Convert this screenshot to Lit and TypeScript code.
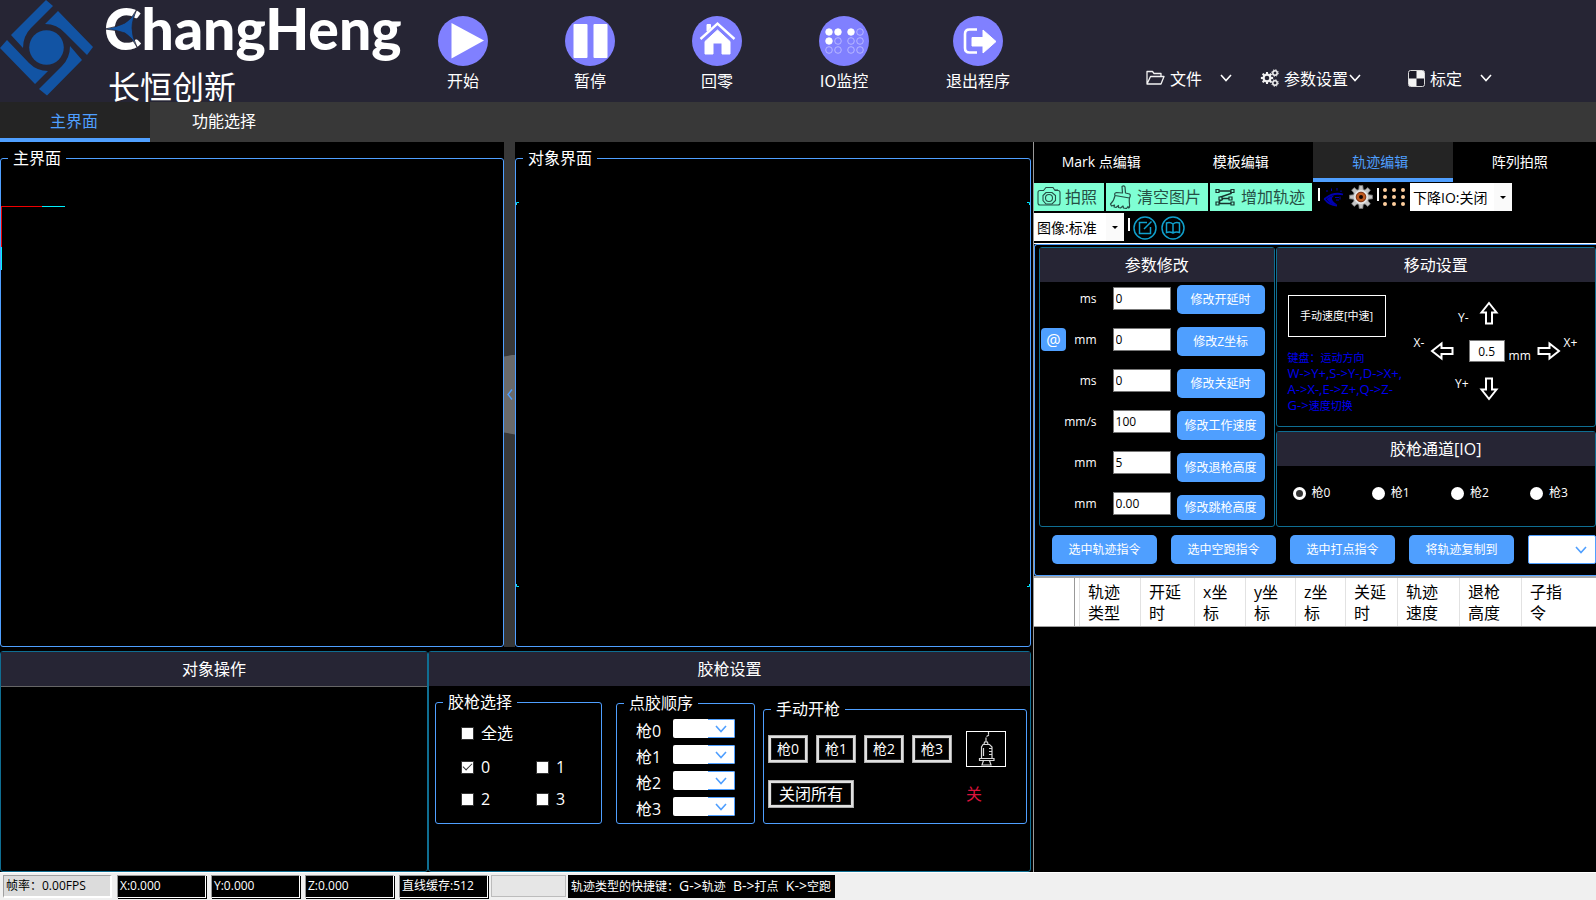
import { LitElement, html, svg, css, nothing } from "lit";
import { customElement, state } from "lit/decorators.js";

const chevron = html`<svg class="chev" viewBox="0 0 12 8" width="12" height="8" aria-hidden="true">
  <path d="M1 1l5 5.5L11 1" fill="none" stroke="currentColor" stroke-width="1.6" />
</svg>`;

const disc = (inner: unknown) => html`<svg viewBox="0 0 50 50" width="50" height="50" aria-hidden="true">
  <circle cx="25" cy="25" r="25" fill="#8080ff" />${inner}
</svg>`;

const ioDots = [0, 1, 2].flatMap((r) =>
  [11, 20, 33, 42].map((x, c) => {
    const filled = (r === 0 && c < 3) || (r === 1 && c === 0);
    return svg`<circle cx=${x - 1} cy=${16 + r * 9} r="3.3" fill=${filled ? "#fff" : "none"} stroke=${filled ? "#fff" : "#c4c4ff"} stroke-width="0.8" />`;
  })
);

const mainActions = [
  { label: "开始", icon: disc(svg`<path d="M13.5 7L46 24.5 13.5 42.500z" fill="#fff" />`) },
  { label: "暂停", icon: disc(svg`<rect x="8.500" y="8" width="14" height="34" rx="1" fill="#fff" /><rect x="28.500" y="8" width="14" height="34" rx="1" fill="#fff" />`) },
  {
    label: "回零",
    icon: disc(svg`<path d="M8.500 23L25.500 7.500 42.500 23" fill="none" stroke="#fff" stroke-width="2.400" />
      <path d="M15 15V8.500h3.500V12z" fill="#fff" stroke="#fff" />
      <path d="M25.500 14L38 25.500V38H30V27h-9v11h-8V25.500z" fill="#fff" stroke="#fff" stroke-linejoin="round" />`),
  },
  { label: "IO监控", icon: disc(ioDots) },
  {
    label: "退出程序",
    icon: disc(svg`<path d="M24 13.500h-7.500q-4.500 0-4.500 4.500v14q0 4.500 4.500 4.500H24" fill="none" stroke="#fff" stroke-width="2.600" />
      <path d="M19 21.500h11V14l13 11.500L30 37v-7H19z" fill="#fff" stroke="#fff" stroke-linejoin="round" />`),
  },
];

const gearPath = (cx: number, cy: number, r: number, teeth: number, depth: number) => {
  const pts: string[] = [];
  for (let i = 0; i < teeth; i++) {
    const a = (i / teeth) * Math.PI * 2 - Math.PI / 2;
    const s = Math.PI / teeth;
    for (const [off, rad] of [[-0.9, r], [-0.5, r + depth], [0.5, r + depth], [0.9, r]]) {
      const t = a + off * s * 0.8;
      pts.push(`${(cx + Math.cos(t) * rad).toFixed(2)} ${(cy + Math.sin(t) * rad).toFixed(2)}`);
    }
  }
  return "M" + pts.join("L") + "z";
};

const menus = [
  {
    label: "文件",
    wide: true,
    icon: html`<svg viewBox="0 0 19 16" width="19" height="16" fill="none" stroke="#f2f2f2" stroke-width="1.300" stroke-linejoin="round">
      <path d="M1 14V1.500h5.500l1.500 2h7V6.500M1 14L4.500 6.500H18L15 14z" /></svg>`,
  },
  {
    label: "参数设置",
    wide: false,
    icon: html`<svg viewBox="0 0 19 18" width="19" height="18" fill="none" stroke="#f2f2f2">
      <path d=${gearPath(7, 9, 4.4, 8, 1.8)} fill="#f2f2f2" stroke="none" /><circle cx="7" cy="9" r="2.300" fill="#262534" stroke="none" />
      <circle cx="15" cy="4" r="2.200" stroke-width="1.500" /><circle cx="15" cy="4" r="3.300" stroke-dasharray="1.300 1.300" />
      <circle cx="15" cy="14" r="2.200" stroke-width="1.500" /><circle cx="15" cy="14" r="3.300" stroke-dasharray="1.300 1.300" /></svg>`,
  },
  {
    label: "标定",
    wide: true,
    icon: html`<svg viewBox="0 0 17 17" width="17" height="17">
      <rect x="0.500" y="0.500" width="16" height="16" rx="2" fill="#1c1b28" stroke="#d8d8d8" />
      <path d="M8.500 1H15q1 0 1 1v6.500H8.500zM1 8.500h7.500V16H2q-1 0-1-1z" fill="#f4f4f4" /></svg>`,
  },
];

const cameraIcon = html`<svg viewBox="0 0 24 22" width="24" height="22" fill="none" stroke="#264f45" stroke-width="1.100">
  <path d="M3 4.500h3.500L9 1.500h7l2 3h3q2 0 2 2V17q0 2-2 2H3q-2 0-2-2V6.500q0-2 2-2z" />
  <path d="M9 6.500h6l3.500 3v5L15 18H9l-3-3.500v-5z" /><circle cx="12" cy="12" r="3.500" /><path d="M18 4h3" /></svg>`;
const broomIcon = html`<svg viewBox="0 0 24 24" width="24" height="24" fill="none" stroke="#264f45" stroke-width="1.200" stroke-linejoin="round">
  <path d="M13 1.500q2-1.500 3 .5l.500 6 4 1q1.500 1 0 4L6 10.500Q5 8 7.500 7.500l6 .5zM6 10.500Q5 16 1.500 19l1 2 3-1-.500 2 2 .5 2.500-2v2l2 .5 2.500-2 .500 2 3 .5 1.500-2 .500 1.500q1.500 0 1-4-.500-3.500 0-6" /></svg>`;
const trackIcon = html`<svg viewBox="0 0 20 18" width="20" height="18" fill="none" stroke="#16332c" stroke-width="1.600">
  <path d="M2.500 3H16v2.500L5.500 9v1.500h10M8 10.500L4.500 13v2.500h13" />
  <path d="M1 1.500h3v3H1zM16 1.500h3v3h-3zM4 9h3v3H4zM14 9h3v3h-3zM1 14h3v3H1zM16 14h3v3h-3z" fill="#7fffd4" stroke-width="1.200" /></svg>`;
const eyeIcon = html`<svg viewBox="0 0 22 20" width="22" height="20" fill="none" stroke="#0000b0">
  <path d="M20 7.500Q11 5 3 11q-2 1-1 1.500Q6 18 14 18.500" stroke-width="1.800" />
  <path d="M11 8.500Q6 12.500 14 17.500 7 18 3.500 12q3-3 7.500-3.500z" fill="#0000b0" stroke="none" />
  <path d="M4 3v2M8.500 1.500v2.500M14 1v2.500M18 3.500v1.500M12 10.500h4M13 13h3M17 9.500v3" /></svg>`;
const gearIcon = html`<svg viewBox="0 0 24 24" width="24" height="24">
  <path d=${gearPath(12, 12, 8, 8, 3.6)} fill="#c4c4c4" stroke="#777" stroke-width="0.800" />
  <circle cx="12" cy="12" r="7" fill="#e6e6e6" /><circle cx="12" cy="12" r="4.800" fill="#c05a20" stroke="#7a2c0c" /><circle cx="12" cy="12" r="2" fill="#120400" /></svg>`;
const dotsIcon = html`<svg viewBox="0 0 24 20" width="24" height="20" fill="#ffcf9e">
  ${[3, 12, 21].flatMap((x) => [3, 10, 17].map((y) => svg`<circle cx=${x} cy=${y} r="2" />`))}</svg>`;
const editIcon = html`<svg viewBox="0 0 24 24" width="24" height="24" fill="none" stroke="#10a0cc" stroke-width="1.500">
  <circle cx="12" cy="12" r="11" /><path d="M14 6.500H6.500v11h11V11M11 13l7.500-7.500" /></svg>`;
const bookIcon = html`<svg viewBox="0 0 24 24" width="24" height="24" fill="none" stroke="#10a0cc" stroke-width="1.500">
  <circle cx="12" cy="12" r="11" /><path d="M12 8q-3-2.500-6.500-1v9.500q3.500-1 6.500.500 3-1.500 6.500-.5V7Q15 5.500 12 8zv9" /></svg>`;
const syringeIcon = html`<svg viewBox="0 0 38 34" width="38" height="34" fill="none" stroke="#d8d8d8" stroke-width="1.200">
  <path d="M21.500 0v2.500M19.500 4.500L22 3M19 5.500v4M17.500 10h3l.500 2.500h-4zM16 12.500h6.500L25 15v11.500H14.500V15zM12.500 26.500H27v2H12.500zM16.500 28.500l-1.500 4.500h9l-1.500-4.500M15 33h9M22 16.500h3M22 19.500h3M22 22.500h3M16.500 16v8" /></svg>`;

const arrow = (deg: number) => html`<svg viewBox="0 0 24 24" width="24" height="24" fill="none" stroke="#fff" stroke-width="2">
  <path transform="rotate(${deg} 12 12)" d="M12 2l7.500 9.500H15v11H9v-11H4.500z" /></svg>`;

const params = [
  { id: "p-open", unit: "ms", value: "0", action: "修改开延时" },
  { id: "p-z", unit: "mm", value: "0", action: "修改Z坐标", at: true },
  { id: "p-close", unit: "ms", value: "0", action: "修改关延时" },
  { id: "p-speed", unit: "mm/s", value: "100", action: "修改工作速度" },
  { id: "p-back", unit: "mm", value: "5", action: "修改退枪高度" },
  { id: "p-jump", unit: "mm", value: "0.00", action: "修改跳枪高度" },
];

const columns = [["轨迹", "类型"], ["开延", "时"], ["x坐", "标"], ["y坐", "标"], ["z坐", "标"], ["关延", "时"], ["轨迹", "速度"], ["退枪", "高度"], ["子指", "令"]];
const guns = ["0", "1", "2", "3"];

@customElement("app-root")
export class AppRoot extends LitElement {
  @state() private tab = 0;
  @state() private editTab = 2;

  static styles = css`
    :host {
      --blue: #4f9fff;
      --teal: #0f6e92;
      --bar: #262534;
      display: block;
      background: #000;
      color: #fff;
      font: 16px/20px "Open Sans", "Noto Sans CJK SC", sans-serif;
    }
    * { box-sizing: border-box; }
    button, input, select { font: inherit; color: inherit; margin: 0; }
    button { padding: 0; border: 0; background: none; white-space: nowrap; cursor: pointer; }
    svg { display: block; flex: none; }
    .app { min-height: 100vh; display: grid; grid-template-rows: 102px 40px 1fr 28px; }

    header { background: var(--bar); display: flex; font-family: "Noto Sans CJK SC", sans-serif; }
    .brand { display: flex; width: 438px; gap: 11px; }
    .words { position: relative; }
    .name { font: 900 57px/56px Lato, sans-serif; height: 68px; }
    .spark { position: absolute; left: 0; top: 8px; }
    .cn { font-size: 32px; line-height: 34px; padding-left: 4px; }
    .actions { display: flex; gap: 77px; align-items: flex-start; padding-top: 16px; }
    .action { display: grid; justify-items: center; gap: 4px; line-height: 20px; }
    .menus { margin-left: auto; padding: 56px 104px 0 0; display: grid; grid-template-columns: 114px 148px 84px; align-items: start; }
    .menu { display: flex; align-items: center; gap: 5px; line-height: 44px; text-align: left; }
    .menu .chev { margin-left: -4px; }
    .menu.wide .chev { margin-left: 13px; }

    .tabs { display: flex; background: #383838; }
    .tab { width: 150px; padding: 2px 2px 0 0; border-bottom: 4px solid transparent; }
    .tab.on { background: #242424; color: var(--blue); border-color: var(--blue); }

    main { display: grid; grid-template-columns: 1033fr 563fr; }
    .left { display: grid; grid-template-rows: 1fr 221px; gap: 4px; padding-right: 2px; min-width: 0; }
    .views { display: grid; grid-template-columns: 504fr 11px 516fr; }
    fieldset { border: 1px solid var(--blue); border-radius: 3px; margin: 0; padding: 0; min-width: 0; position: relative; }
    legend { margin-left: 7px; padding: 0 5px; line-height: 32px; }
    .axes { position: absolute; left: 0; top: 32px; shape-rendering: crispEdges; }
    .corner { position: absolute; }
    .tl { left: 0; top: 28px; } .tr { right: 0; top: 28px; }
    .bl { left: 0; bottom: 59px; } .br { right: 0; bottom: 59px; }
    .split { background: #383838; display: grid; align-items: center; }
    .grip { height: 80px; width: 100%; background: #6a6a6a; color: var(--blue); display: grid; place-items: center; clip-path: polygon(0 2px, 100% 0, 100% 100%, 0 78px); }

    .lower { display: grid; grid-template-columns: 428fr 603fr; }
    .panel { border: 1px solid var(--teal); border-radius: 3px; min-width: 0; }
    h2 { margin: 0; font-size: 16px; font-weight: 400; line-height: 34px; text-align: center; background: var(--bar); }
    .objects { display: grid; grid-template-rows: 34px 1fr; }
    .list { border-top: 1px solid #666; }
    .groups { display: grid; grid-template-columns: 173fr 139fr 264fr; column-gap: 8px; align-items: end; padding: 0 3px 0 6px; height: 137px; }
    .pick { margin-right: 6px; }
    .checks { display: grid; grid-template-columns: 75px 1fr; padding: 0 0 9px 25px; row-gap: 2px; }
    .checks label { display: flex; align-items: center; gap: 7px; line-height: 30px; }
    .checks label:first-child { grid-column: 1 / 3; padding-bottom: 2px; }
    .box { appearance: none; width: 13px; height: 13px; background: #fff; border: 1px solid #333; display: grid; place-items: center; }
    .box:checked::after { content: ""; width: 8px; height: 4px; border: solid #333; border-width: 0 0 1px 1px; transform: rotate(-45deg); margin-top: -3px; }
    .order { padding: 0 19px; height: 104px; }
    .order div { display: flex; justify-content: space-between; height: 26px; line-height: 25px; }
    .combo { display: grid; grid-template: 100% / 1fr 27px; height: 19px; line-height: 17px; }
    .combo.s { width: 62px; }
    .combo select { appearance: none; grid-area: 1 / 1 / 2 / 3; width: 100%; height: 100%; background: #fff; border: 0; border-radius: 2px; outline-offset: 1px; color: #000; }
    .combo .drop { grid-area: 1 / 2; display: grid; place-items: center; color: var(--blue); border: solid var(--blue); border-width: 1px 1px 1px 0; pointer-events: none; border-radius: 0 2px 2px 0; }
    .manual { display: grid; grid-template-columns: 1fr 40px; padding: 6px 20px 15px 4px; row-gap: 13px; align-items: center; }
    .btns { display: flex; gap: 8px; }
    .hard { width: 40px; height: 28px; font-size: 14px; border: 3px solid #e1e1e1; box-shadow: inset 0 0 0 1px #222; outline: 1px solid #adadad; outline-offset: -1px; line-height: 20px; }
    .hard.all { width: 86px; font-size: 16px; }
    .syr { border: 1px solid #fff; width: 40px; height: 36px; }
    .off { color: #dc143c; }

    .right { display: flex; flex-direction: column; min-width: 0; border-left: 1px solid #9a9a9a; }
    .subtabs { display: flex; height: 40px; padding-right: 4px; font-size: 14px; }
    .subtabs .tab { flex: 1; width: auto; padding: 3px 5px 0 0; }
    .tools { display: flex; height: 30px; padding-top: 1px; align-items: flex-start; }
    .tools.second { height: 31px; }
    .mint { height: 28px; background: #7fffd4; color: #264f45; display: flex; align-items: center; gap: 4px; padding: 0 7px 0 3px; margin-right: 2px; }
    .mint.roomy { gap: 6px; padding-left: 5px; }
    .sep { width: 2px; height: 13px; background: #fff; margin: 5px 3px 0 4px; }
    .tool { display: grid; place-items: center; height: 28px; }
    .second .tool { height: 30px; }
    .tool + .tool { margin-left: 4px; }
    .combo.t { height: 28px; grid-template-columns: 1fr 18px; font-size: 14px; width: 102px; margin-left: 4px; }
    .combo.t select { border-radius: 0; padding: 0 3px; }
    .combo.t .drop { border: 0; color: #000; background: #fafafa; }
    .combo.m { width: 90px; margin-left: 0; }
    .edit { border-top: 1px solid #fff; }
    .inner { border: 1px solid var(--blue); border-right: 0; border-radius: 3px 0 0 3px; padding: 2px 0 11px 4px; }
    .cols { display: grid; grid-template-columns: 236fr 321fr; column-gap: 1px; }
    .stack { display: grid; grid-template-rows: 180px 96px; row-gap: 4px; padding: 0; }
    .params { display: grid; grid-template-columns: 1fr 58px 94px; padding: 3px 9px 6px 1px; font-size: 12px; }
    .units, .vals { display: grid; gap: 18px; grid-auto-rows: 23px; padding-top: 2px; align-content: start; }
    .units { padding-right: 16px; }
    .units div { display: flex; align-items: center; justify-content: flex-end; line-height: 23px; }
    .at { background: var(--blue); border-radius: 4px; width: 25px; height: 23px; font-size: 16px; line-height: 20px; margin-right: auto; }
    .num { width: 100%; height: 23px; background: #fff; color: #000; border: 1px solid #777; padding: 0 2px; font-size: 12px; border-radius: 0; }
    .mods { display: grid; gap: 13px; grid-template-rows: repeat(5, 29px) 25px; padding-left: 6px; }
    .pill { background: var(--blue); border-radius: 5px; font-size: 12px; line-height: 20px; }
    .move { display: flex; padding: 13px 0 0 11px; gap: 10px; font-size: 12px; }
    .help { width: 116px; white-space: nowrap; }
    .speed { width: 98px; height: 42px; border: 1px solid #fff; font-size: 11px; }
    .keys { margin: 12px 0 0; color: #0000f0; font-size: 13px; line-height: 16px; }
    .keys div { height: 16px; }
    .han { font-size: 11px; }
    .jog { display: grid; grid-template-columns: 16px 24px 15px 40px 28px 24px 1fr; grid-template-rows: 24px 24px 24px; row-gap: 14px; padding-top: 6px; line-height: 14px; white-space: nowrap; align-items: center; justify-items: start; }
    .jog .num { width: 36px; height: 22px; text-align: center; }
    .jog .y { grid-column: 3; align-self: end; justify-self: end; }
    .jog .y.down { align-self: start; }
    .jog .c { grid-column: 4; justify-self: center; }
    .jog .x { align-self: start; line-height: 8px; }
    .jog .u { align-self: end; }
    .jog .xr { padding-left: 3px; }
    .radios { display: flex; justify-content: space-between; padding: 0 27px 0 16px; font-size: 12px; line-height: 54px; }
    .radios label { display: flex; align-items: center; gap: 6px; }
    .radios input { appearance: none; width: 13px; height: 13px; border-radius: 50%; background: #fff; }
    .radios input:checked { background: #333; border: 3px solid #fff; }
    .sel { display: flex; gap: 14px; padding: 8px 0 0 13px; }
    .sel .pill { flex: 1; height: 29px; }
    .combo.c { width: 68px; height: 29px; grid-template-columns: 1fr 30px; }
    .combo.c select { border: 1px solid var(--blue); }
    .combo.c .drop { border: 0; }

    table { width: 100%; table-layout: fixed; border-collapse: separate; border-spacing: 0; background: #fff; color: #000; border-top: 2px solid #a8a8a8; border-bottom: 1px solid #a0a0a0; }
    th { font-weight: 400; text-align: left; line-height: 21px; padding: 4px 0 2px 8px; border-right: 1px solid #e2e2e2; white-space: nowrap; }
    th:last-child { border-right: 0; }
    th.head { border-right-color: #999; }
    .c0 { width: 41px; } .c1 { width: 5px; } .k0 { width: 61px; } .k1 { width: 54px; } .k2 { width: 51px; } .k3, .k4 { width: 50px; }
    .k5 { width: 52px; } .k6, .k7 { width: 62px; }
    th.c1 { padding: 0; }

    footer { background: #f0f0f0; display: flex; gap: 5px; padding: 2px 3px; font-size: 12px; line-height: 20px; border-top: 1px solid #fff; white-space: nowrap; }
    .cell { width: 89px; height: 23px; background: #000; border: 1px solid; border-color: #999 #fff #fff #999; padding: 0 2px; box-shadow: 1px 1px #000; }
    .cell.fps { width: 109px; background: #dcdcdc; color: #000; box-shadow: none; border-color: #a0a0a0 #fff #fff #a0a0a0; border-width: 1px 2px 2px 1px; }
    .prog { width: 75px; height: 22px; background: #e6e6e6; border: 1px solid #bcbcbc; margin-left: -2px; }
    .hint { background: #000; height: 23px; padding: 1px 4px 0 3px; margin-left: -3px; white-space: pre; }
    .lat { font-size: 14px; }
  `;

  private combo(kind: string, label: string, text = "", id = "") {
    return html`<span class="combo ${kind}">
      <select aria-label=${label} id=${id || nothing}><option>${text}</option></select>
      <span class="drop">${kind.startsWith("t")
        ? html`<svg viewBox="0 0 6 3" width="6" height="3"><path d="M0 0h6L3 3z" /></svg>`
        : chevron}</span>
    </span>`;
  }

  private corner(cls: string, d: string) {
    return html`<svg class="corner ${cls}" viewBox="0 0 4 4" width="4" height="4" fill="none" stroke="#00e5ff"><path d=${d} /></svg>`;
  }

  render() {
    return html`<div class="app">
      <header>
        <div class="brand">
          <svg viewBox="0 0 93 96" width="93" height="96" fill="#1254a4" aria-hidden="true">
            <circle cx="46.500" cy="47.500" r="17.300" />
            <path d="M46 0l7 6-22 22q-8 8-8 20L11 35z" />
            <path d="M58 11l35 36-6 8-22-22q-8-9-20-9z" />
            <path d="M47 95.500L82 60 70 46q0 12-8 20L39 89z" />
            <path d="M0 48l7-8 22 23q8 8 19 8L35 84z" />
          </svg>
          <div class="words">
            <div class="name">ChangHeng</div>
            <svg class="spark" viewBox="0 0 36 42" width="36" height="42" aria-hidden="true">
              <path d="M33 1Q28 12 28 20q0 9 5 19-5-10-12-14-8-3-20-4 12-2 20-6 7-4 12-14z" fill="#1254a4" stroke="#262534" stroke-width="0.800" />
            </svg>
            <div class="cn">长恒创新</div>
          </div>
        </div>
        <div class="actions">
          ${mainActions.map((a) => html`<button class="action">${a.icon}<span>${a.label}</span></button>`)}
        </div>
        <nav class="menus">
          ${menus.map((m) => html`<button class="menu ${m.wide ? "wide" : ""}">${m.icon}<span>${m.label}</span>${chevron}</button>`)}
        </nav>
      </header>

      <div class="tabs">
        ${["主界面", "功能选择"].map((t, i) => html`<button class="tab ${i === this.tab ? "on" : ""}" @click=${() => (this.tab = i)}>${t}</button>`)}
      </div>

      <main>
        <section class="left">
          <div class="views">
            <fieldset>
              <legend>主界面</legend>
              <svg class="axes" viewBox="0 0 65 65" width="65" height="65">
                <path d="M0 0h41v1H1v40H0z" fill="#f00000" /><path d="M41 0h23v1H41zM0 41h1v23H0z" fill="#00f0ff" />
              </svg>
            </fieldset>
            <div class="split"><button class="grip" aria-label="折叠">
              <svg viewBox="0 0 6 11" width="6" height="11" fill="none" stroke="currentColor" stroke-width="1.400"><path d="M5 .5l-4 5 4 5" /></svg>
            </button></div>
            <fieldset>
              <legend>对象界面</legend>
              ${this.corner("tl", "M.5 3V.5H3")}${this.corner("tr", "M1 .5h2.500V3")}${this.corner("bl", "M.5 1v2.500H3")}${this.corner("br", "M1 3.500h2.500V1")}
            </fieldset>
          </div>
          <div class="lower">
            <div class="panel objects"><h2>对象操作</h2><div class="list"></div></div>
            <div class="panel">
              <h2>胶枪设置</h2>
              <div class="groups">
                <fieldset class="pick">
                  <legend>胶枪选择</legend>
                  <div class="checks">
                    <label><input class="box" type="checkbox" />全选</label>
                    ${guns.map((g, i) => html`<label><input class="box" type="checkbox" ?checked=${i === 0} />${g}</label>`)}
                  </div>
                </fieldset>
                <fieldset>
                  <legend>点胶顺序</legend>
                  <div class="order">
                    ${guns.map((g) => html`<div><label for="order-${g}">枪${g}</label>${this.combo("s", `枪${g}`, "", `order-${g}`)}</div>`)}
                  </div>
                </fieldset>
                <fieldset>
                  <legend>手动开枪</legend>
                  <div class="manual">
                    <div class="btns">${guns.map((g) => html`<button class="hard">枪${g}</button>`)}</div>
                    <button class="syr" aria-label="开枪">${syringeIcon}</button>
                    <div class="btns"><button class="hard all">关闭所有</button></div>
                    <span class="off">关</span>
                  </div>
                </fieldset>
              </div>
            </div>
          </div>
        </section>

        <section class="right">
          <div class="subtabs">
            ${["Mark 点编辑", "模板编辑", "轨迹编辑", "阵列拍照"].map(
              (t, i) => html`<button class="tab ${i === this.editTab ? "on" : ""}" @click=${() => (this.editTab = i)}>${t}</button>`
            )}
          </div>
          <div class="tools">
            <button class="mint">${cameraIcon}拍照</button>
            <button class="mint">${broomIcon}清空图片</button>
            <button class="mint roomy">${trackIcon}增加轨迹</button>
            <span class="sep"></span>
            <button class="tool" aria-label="显示">${eyeIcon}</button>
            <button class="tool" aria-label="设置">${gearIcon}</button>
            <span class="sep"></span>
            <button class="tool" aria-label="阵列">${dotsIcon}</button>
            ${this.combo("t", "下降IO", "下降IO:关闭")}
          </div>
          <div class="tools second">
            ${this.combo("t m", "图像", "图像:标准")}
            <span class="sep"></span>
            <button class="tool" aria-label="编辑">${editIcon}</button>
            <button class="tool" aria-label="手册">${bookIcon}</button>
          </div>
          <div class="edit"><div class="inner">
            <div class="cols">
              <div class="panel">
                <h2>参数修改</h2>
                <div class="params">
                  <div class="units">${params.map((p) => html`<div>${p.at ? html`<button class="at">@</button>` : nothing}<label for=${p.id}>${p.unit}</label></div>`)}</div>
                  <div class="vals">${params.map((p) => html`<input class="num" id=${p.id} .value=${p.value} />`)}</div>
                  <div class="mods">${params.map((p) => html`<button class="pill">${p.action}</button>`)}</div>
                </div>
              </div>
              <div class="stack">
                <div class="panel">
                  <h2>移动设置</h2>
                  <div class="move">
                    <div class="help">
                      <button class="speed">手动速度[中速]</button>
                      <div class="keys">
                        <div><span class="han">键盘：运动方向</span></div>
                        <div>W->Y+,S->Y-,D->X+,</div>
                        <div>A->X-,E->Z+,Q->Z-</div>
                        <div>G-><span class="han">速度切换</span></div>
                      </div>
                    </div>
                    <div class="jog">
                      <span class="y">Y-</span><button class="c" aria-label="Y-">${arrow(0)}</button><span></span><span></span><span></span>
                      <span class="x">X-</span><button aria-label="X-">${arrow(270)}</button><span></span>
                      <input class="num" id="step" .value=${"0.5"} /><label class="u" for="step">mm</label>
                      <button aria-label="X+">${arrow(90)}</button><span class="x xr">X+</span>
                      <span class="y down">Y+</span><button class="c" aria-label="Y+">${arrow(180)}</button>
                    </div>
                  </div>
                </div>
                <div class="panel">
                  <h2>胶枪通道[IO]</h2>
                  <div class="radios">
                    ${guns.map((g, i) => html`<label><input type="radio" name="gun" ?checked=${i === 0} />枪${g}</label>`)}
                  </div>
                </div>
              </div>
            </div>
            <div class="sel">
              ${["选中轨迹指令", "选中空跑指令", "选中打点指令", "将轨迹复制到"].map((t) => html`<button class="pill">${t}</button>`)}
              ${this.combo("c", "复制目标")}
            </div>
          </div></div>
          <table>
            <thead><tr>
              <th class="head c0"></th><th class="c1"></th>
              ${columns.map(([a, b], i) => html`<th class="k${i}">${a}<br />${b}</th>`)}
            </tr></thead>
            <tbody></tbody>
          </table>
        </section>
      </main>

      <footer>
        <span class="cell fps">帧率：0.00FPS</span>
        <span class="cell">X:0.000</span>
        <span class="cell">Y:0.000</span>
        <span class="cell">Z:0.000</span>
        <span class="cell">直线缓存:512</span>
        <span class="prog"></span>
        <span class="hint">轨迹类型的快捷键：<span class="lat">G-></span>轨迹<span class="lat">  B-></span>打点<span class="lat">  K-></span>空跑</span>
      </footer>
    </div>`;
  }
}
